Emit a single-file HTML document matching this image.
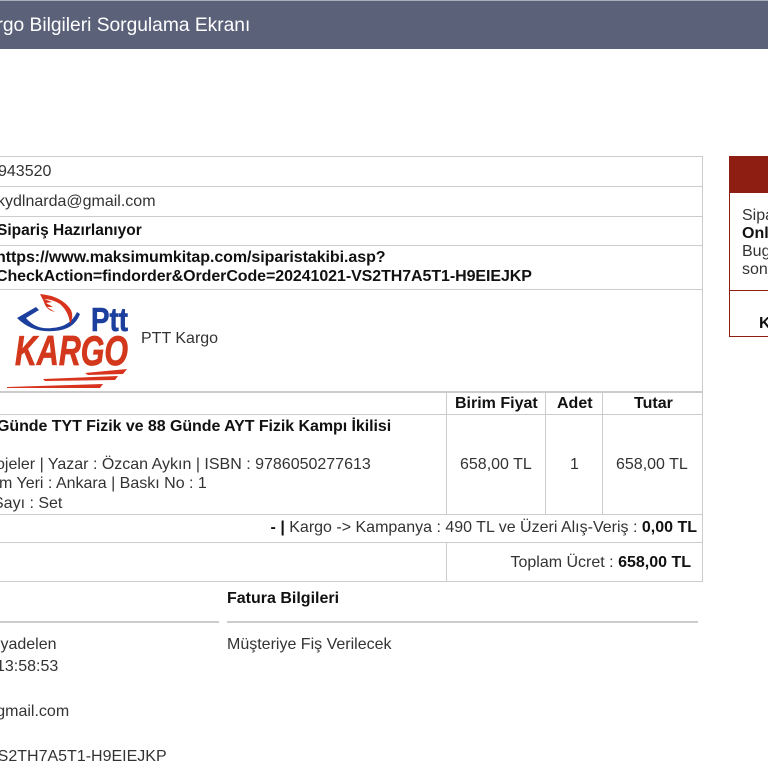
<!DOCTYPE html>
<html lang="tr"><head><meta charset="utf-8"><title>Kargo Bilgileri Sorgulama Ekranı</title>
<style>
html,body{margin:0;padding:0;background:#fff}
body{width:768px;height:768px;overflow:hidden;position:relative;font-family:"Liberation Sans",sans-serif;font-size:16px;color:#333}
.t{position:absolute;white-space:nowrap;line-height:20px}
.b{font-weight:bold;color:#111}
.l{position:absolute;background:#ccc}
#clip{position:absolute;left:0;top:0;width:768px;height:768px;overflow:hidden}
</style></head><body><div id="clip">
<div style="position:absolute;left:0;top:0;width:768px;height:49px;background:#5a6179;border-top:1px solid #a9aebb;box-sizing:border-box"></div>
<div class="t" style="left:-27px;top:16px;font-size:19.2px;color:#fff;">Kargo Bilgileri Sorgulama Ekranı</div>

<div class="l" style="left:0;top:156px;width:703px;height:1px"></div>
<div class="l" style="left:0;top:186px;width:703px;height:1px"></div>
<div class="l" style="left:0;top:216px;width:703px;height:1px"></div>
<div class="l" style="left:0;top:245px;width:703px;height:1px"></div>
<div class="l" style="left:0;top:289px;width:703px;height:1px"></div>
<div class="l" style="left:0;top:391px;width:703px;height:2px"></div>
<div class="l" style="left:0;top:414px;width:703px;height:1px"></div>
<div class="l" style="left:0;top:514px;width:703px;height:1px"></div>
<div class="l" style="left:0;top:542px;width:703px;height:1px"></div>
<div class="l" style="left:0;top:581px;width:703px;height:1px"></div>
<div class="l" style="left:702px;top:156px;width:1px;height:426px"></div>
<div class="l" style="left:446px;top:392px;width:1px;height:122px"></div>
<div class="l" style="left:446px;top:543px;width:1px;height:38px"></div>
<div class="l" style="left:545px;top:392px;width:1px;height:122px"></div>
<div class="l" style="left:602px;top:392px;width:1px;height:122px"></div>

<div class="t" style="left:-2px;top:162px">943520</div>
<div class="t" style="left:-3px;top:192px">kydlnarda@gmail.com</div>
<div class="t b" style="left:-3px;top:221px;font-size:15.5px;">Sipariş Hazırlanıyor</div>
<div class="t b" style="left:-4px;top:248px;letter-spacing:-.06px">https://www.maksimumkitap.com/siparistakibi.asp?</div>
<div class="t b" style="left:-4px;top:267px;letter-spacing:-.08px">CheckAction=findorder&amp;OrderCode=20241021-VS2TH7A5T1-H9EIEJKP</div>

<svg style="position:absolute;left:0;top:290px" width="135" height="100" viewBox="0 0 135 100">
<path d="M17 28 L36 17 L39 20 L26 28 Q36 40 52 38 Q70 37 77 22 L80 24 Q74 40 54 41 Q32 43 17 28Z" fill="#1c3f9e"/>
<path d="M40 4 Q62 6 71 20 Q74 27 70 34 Q69 22 60 14 Q52 9 44 9 L52 12 L46 13 L53 17 L47 17 L55 22 Q46 20 44 12Z" fill="#d8331c"/>
<text x="91" y="41" font-family="Liberation Sans" font-size="33" font-weight="bold" fill="#1c3f9e" stroke="#1c3f9e" stroke-width=".6" textLength="37" lengthAdjust="spacingAndGlyphs">Ptt</text>
<text x="15" y="75" font-family="Liberation Sans" font-size="42" font-weight="bold" font-style="italic" fill="#d3381c" stroke="#d3381c" stroke-width=".8" textLength="113" lengthAdjust="spacingAndGlyphs">KARGO</text>
<path d="M85 83 L127 79 L123 84 L88 85Z M43 89 L118 86 L115 90 L45 91Z M7 97 L103 94 L100 98 L7 98Z" fill="#d8331c"/>
</svg>
<div class="t" style="left:141px;top:329px">PTT Kargo</div>

<div class="t b" style="left:455px;top:394px">Birim Fiyat</div>
<div class="t b" style="left:557px;top:394px">Adet</div>
<div class="t b" style="left:634px;top:394px">Tutar</div>

<div class="t b" style="left:-3px;top:417px;letter-spacing:-.06px">Günde TYT Fizik ve 88 Günde AYT Fizik Kampı İkilisi</div>
<div class="t" style="left:-20px;top:455px">Projeler | Yazar : Özcan Aykın | ISBN : 9786050277613</div>
<div class="t" style="left:-33px;top:474px">Basım Yeri : Ankara | Baskı No : 1</div>
<div class="t" style="left:-7px;top:494px">Sayı : Set</div>
<div class="t" style="left:460px;top:455px">658,00 TL</div>
<div class="t" style="left:570px;top:455px">1</div>
<div class="t" style="left:616px;top:455px">658,00 TL</div>

<div class="t" style="right:71px;top:518px"><b style="color:#111">- |</b> Kargo -&gt; Kampanya : 490 TL ve Üzeri Alış-Veriş : <b style="color:#111">0,00 TL</b></div>
<div class="t" style="right:77px;top:553px">Toplam Ücret : <b style="color:#111">658,00 TL</b></div>

<div class="t b" style="left:227px;top:589px">Fatura Bilgileri</div>
<div class="l" style="left:0;top:621px;width:219px;height:2px"></div>
<div class="l" style="left:227px;top:621px;width:471px;height:2px"></div>
<div class="t" style="left:-4px;top:635px;">&nbsp;yadelen</div>
<div class="t" style="left:227px;top:635px">Müşteriye Fiş Verilecek</div>
<div class="t" style="left:-4px;top:657px">13:58:53</div>
<div class="t" style="left:-20px;top:702px">@gmail.com</div>
<div class="t" style="left:-13px;top:747px">VS2TH7A5T1-H9EIEJKP</div>

<div style="position:absolute;left:729px;top:156px;width:60px;height:181px;box-sizing:border-box;border:1px solid #8f1e12;background:#fff"></div>
<div style="position:absolute;left:729px;top:156px;width:60px;height:37px;background:#8f1e12"></div>
<div style="position:absolute;left:729px;top:290px;width:60px;height:1px;background:#8f1e12"></div>
<div class="t" style="left:742px;top:206px">Sipariş</div>
<div class="t b" style="left:742px;top:224px">Online</div>
<div class="t" style="left:742px;top:242px">Bugün</div>
<div class="t" style="left:742px;top:260px">sonra</div>
<div class="t b" style="left:759px;top:314px">Kargo</div>
</div></body></html>
